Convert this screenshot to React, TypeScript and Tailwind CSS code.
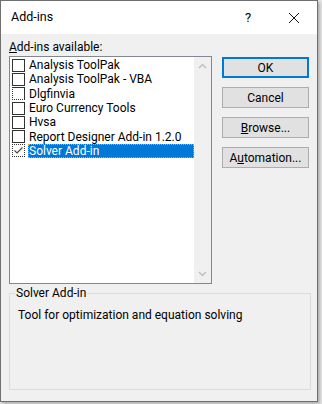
const items = [
  { name: "Analysis ToolPak", checked: false, box: "border border-[#333]" },
  { name: "Analysis ToolPak - VBA", checked: false, box: "border border-[#333]" },
  { name: "Dlgfinvia", checked: false, box: "border border-[#333] [border-left-style:dotted] [border-bottom-style:dotted]" },
  { name: "Euro Currency Tools", checked: false, box: "border border-[#333]" },
  { name: "Hvsa", checked: false, box: "border border-[#333]" },
  { name: "Report Designer Add-in 1.2.0", checked: false, box: "border border-[#333]" },
  { name: "Solver Add-in", checked: true, selected: true, box: "border border-dotted border-[#333]" },
];

function Check({ checked, box }: { checked: boolean; box: string }) {
  return (
    <span className={"w-[13px] h-[13px] shrink-0 bg-white flex items-center justify-center " + box}>
      {checked && (
        <svg width="11" height="11" viewBox="0 0 11 11">
          <path d="M1.5 5.5 L4 8 L9.5 2.5" fill="none" stroke="#444" strokeWidth="1.1" />
        </svg>
      )}
    </span>
  );
}

function Btn({ children, primary }: { children: React.ReactNode; primary?: boolean }) {
  return (
    <div
      className={
        "w-[87px] h-[21px] flex items-center justify-center bg-[#e1e1e1] text-[12px] text-black " +
        (primary ? "border-2 border-[#0078d7]" : "border border-[#adadad]")
      }
    >
      {children}
    </div>
  );
}

export default function App() {
  return (
    <div className="w-[322px] h-[404px] bg-[#e8e8e8] overflow-hidden font-['Roboto',sans-serif]">
      <div className="w-[318px] h-[402px] border border-[#6f6f6f] bg-[#f0f0f0] flex flex-col shadow-[2px_2px_3px_rgba(0,0,0,0.25)]">
        {/* title bar */}
        <div className="h-[33px] bg-white flex items-center text-[12.5px] text-black">
          <span className="pl-[10px] flex-1">Add-ins</span>
          <span className="w-[46px] text-center text-[13px]">?</span>
          <span className="w-[46px] flex justify-center">
            <svg width="12" height="12" viewBox="0 0 12 12">
              <path d="M1 1 L11 11 M11 1 L1 11" stroke="#111" strokeWidth="1" />
            </svg>
          </span>
        </div>

        <div className="flex-1 px-[8px] pt-[6px] pb-[10px] flex flex-col text-[12px] text-black leading-[14px]">
          <div className="h-[16px]">
            <span className="underline">A</span>dd-ins available:
          </div>
          <div className="flex gap-[10px]">
            {/* list box */}
            <div className="w-[205px] h-[228px] border border-[#828790] bg-white flex">
              <div className="flex-1 pt-[1px] pl-[2px]">
                {items.map((it) => (
                  <div key={it.name} className="h-[14.3px] flex items-center gap-[3px]">
                    <Check checked={it.checked} box={it.box} />
                    <span
                      className={
                        "h-[14px] flex items-center pl-[1px] pr-[2px] whitespace-nowrap " +
                        (it.selected
                          ? "bg-[#0078d7] text-white flex-1 outline outline-1 outline-dotted outline-[#f0a030] -outline-offset-1"
                          : "")
                      }
                    >
                      {it.name}
                    </span>
                  </div>
                ))}
              </div>
              <div className="w-[17px] bg-[#f0f0f0] flex flex-col justify-between items-center py-[6px]">
                <svg width="9" height="6" viewBox="0 0 9 6">
                  <path d="M1 5 L4.5 1.5 L8 5" fill="none" stroke="#c0c0c0" strokeWidth="1.5" />
                </svg>
                <svg width="9" height="6" viewBox="0 0 9 6">
                  <path d="M1 1 L4.5 4.5 L8 1" fill="none" stroke="#c0c0c0" strokeWidth="1.5" />
                </svg>
              </div>
            </div>
            {/* buttons */}
            <div className="flex flex-col gap-[9px] pt-[1px]">
              <Btn primary>OK</Btn>
              <Btn>Cancel</Btn>
              <Btn>
                <span>
                  <span className="underline">B</span>rowse...
                </span>
              </Btn>
              <Btn>
                <span>
                  A<span className="underline">u</span>tomation...
                </span>
              </Btn>
            </div>
          </div>

          {/* group box */}
          <div className="mt-[9px] w-[302px] h-[97px] border border-[#dcdcdc] relative">
            <span className="absolute -top-[8px] left-[5px] bg-[#f0f0f0] px-[1px]">Solver Add-in</span>
            <div className="pt-[14px] pl-[8px]">Tool for optimization and equation solving</div>
          </div>
        </div>
      </div>
    </div>
  );
}
